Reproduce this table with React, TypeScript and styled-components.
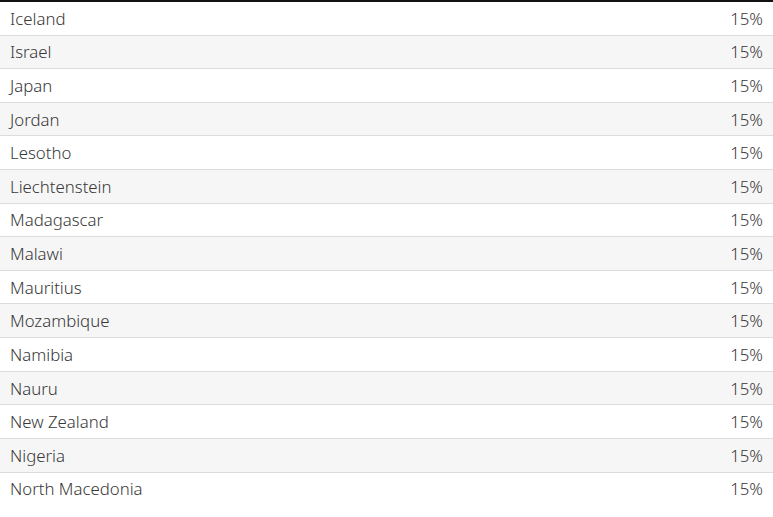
import React from "react";
import styled, { createGlobalStyle } from "styled-components";

const GlobalStyle = createGlobalStyle`
  html, body {
    margin: 0;
    padding: 0;
    background: #ffffff;
  }
`;

const rows: [string, string][] = [
  ["Iceland", "15%"],
  ["Israel", "15%"],
  ["Japan", "15%"],
  ["Jordan", "15%"],
  ["Lesotho", "15%"],
  ["Liechtenstein", "15%"],
  ["Madagascar", "15%"],
  ["Malawi", "15%"],
  ["Mauritius", "15%"],
  ["Mozambique", "15%"],
  ["Namibia", "15%"],
  ["Nauru", "15%"],
  ["New Zealand", "15%"],
  ["Nigeria", "15%"],
  ["North Macedonia", "15%"],
];

const Table = styled.div`
  width: 773px;
  border-top: 2px solid #121212;
  font-family: "Noto Sans", "Open Sans", sans-serif;
  font-weight: 300;
  font-size: 16.8px;
  color: #383838;
`;

const Row = styled.div<{ $shaded: boolean }>`
  display: flex;
  justify-content: space-between;
  align-items: center;
  height: 32.62px;
  padding: 0 10px;
  background: ${(p) => (p.$shaded ? "#f6f6f6" : "#ffffff")};
  border-bottom: 1px solid #dcdcdc;
  &:last-child {
    border-bottom: none;
  }
`;

const Name = styled.span``;

const Rate = styled.span`
  text-align: right;
`;

export default function App() {
  return (
    <>
      <GlobalStyle />
      <Table>
        {rows.map(([country, rate], i) => (
          <Row key={country} $shaded={i % 2 === 1}>
            <Name>{country}</Name>
            <Rate>{rate}</Rate>
          </Row>
        ))}
      </Table>
    </>
  );
}
